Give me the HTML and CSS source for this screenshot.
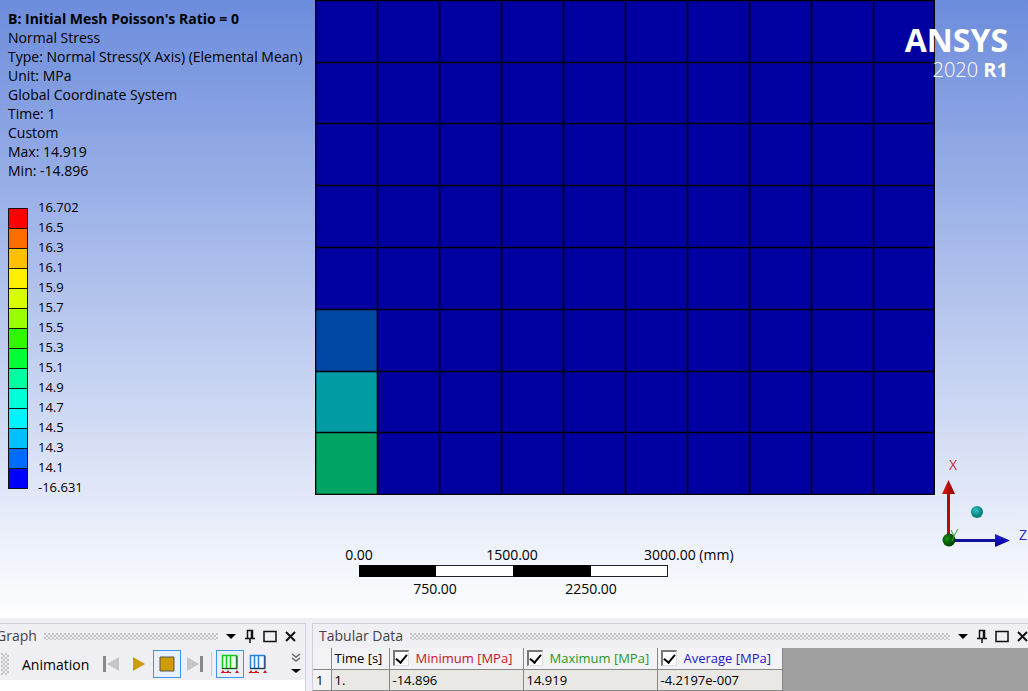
FILE: index.html
```
<!DOCTYPE html>
<html lang="en">
<head>
    <meta charset="UTF-8">
    <meta name="viewport" content="width=device-width, initial-scale=1.0">
    <title>Normal Stress</title>
    <link rel="stylesheet" href="styles.css">
</head>
<body>
    <main class="viewport">
        <section class="info">
            <h1>B: Initial Mesh Poisson's Ratio = 0</h1>
            <p>Normal Stress</p>
            <p>Type: Normal Stress(X Axis) (Elemental Mean)</p>
            <p>Unit: MPa</p>
            <p>Global Coordinate System</p>
            <p>Time: 1</p>
            <p>Custom</p>
            <p>Max: 14.919</p>
            <p>Min: -14.896</p>

            <div class="legend">
                <div class="swatches">
                    <i class="c1"></i><i class="c2"></i><i class="c3"></i><i class="c4"></i><i class="c5"></i><i class="c6"></i><i class="c7"></i>
                    <i class="c8"></i><i class="c9"></i><i class="c10"></i><i class="c11"></i><i class="c12"></i><i class="c13"></i><i class="c14"></i>
                </div>
                <ul class="values">
                    <li>16.702</li>
                    <li>16.5</li>
                    <li>16.3</li>
                    <li>16.1</li>
                    <li>15.9</li>
                    <li>15.7</li>
                    <li>15.5</li>
                    <li>15.3</li>
                    <li>15.1</li>
                    <li>14.9</li>
                    <li>14.7</li>
                    <li>14.5</li>
                    <li>14.3</li>
                    <li>14.1</li>
                    <li>-16.631</li>
                </ul>
            </div>
        </section>

        <svg class="mesh" viewBox="0 0 620 495">
            <rect width="620" height="495" fill="#0000a0"/>
            <rect y="309" width="62" height="62" fill="#0046a2"/>
            <rect y="371" width="62" height="62" fill="#009ba3"/>
            <rect y="432" width="62" height="62" fill="#00a364"/>
            <path d="M.5 0V495M62.5 0V495M124.5 0V495M186.5 0V495M248.5 0V495M310.5 0V495M372.5 0V495M434.5 0V495M496.5 0V495M558.5 0V495M619.5 0V495
                M0 .5H620M0 62.5H620M0 123.5H620M0 185.5H620M0 247.5H620M0 309.5H620M0 371.5H620M0 432.5H620M0 494.5H620" stroke="#000" stroke-width="1.600"/>
        </svg>

        <svg class="scale" width="400" height="60" viewBox="0 0 400 60">
            <rect x="19.500" y="21.500" width="308" height="11" fill="#fff" stroke="#222"/>
            <path d="M19 21h77v12H19zM173 21h78v12h-78z"/>
            <text x="19" y="16">0.00</text>
            <text x="172" y="16">1500.00</text>
            <text class="end" x="304" y="16">3000.00 (mm)</text>
            <text x="95" y="50">750.00</text>
            <text x="251" y="50">2250.00</text>
        </svg>

        <svg class="triad" width="93" height="100" viewBox="0 0 93 100">
            <defs>
                <radialGradient id="teal" cx=".4" cy=".35"><stop offset="0" stop-color="#35c4c4"/><stop offset="1" stop-color="#078080"/></radialGradient>
                <radialGradient id="green" cx=".35" cy=".4"><stop offset="0" stop-color="#189018"/><stop offset="1" stop-color="#004a00"/></radialGradient>
                <linearGradient id="red"><stop offset="0" stop-color="#e01818"/><stop offset="1" stop-color="#8c0000"/></linearGradient>
                <linearGradient id="blue" x2="0" y2="1"><stop offset="0" stop-color="#2020e0"/><stop offset="1" stop-color="#000090"/></linearGradient>
            </defs>
            <path d="M12 38h3v44h-3z" fill="#b80808"/>
            <path d="M13.500 25L20 39H7z" fill="url(#red)"/>
            <path d="M17 84h44v3H17z" fill="#101098"/>
            <path d="M60 79L75 85.500L60 92z" fill="url(#blue)"/>
            <circle cx="14" cy="85" r="6.500" fill="url(#green)"/>
            <path d="M16 75l3 6 4-7M19 81l-2 5" fill="none" stroke="#35a035"/>
            <circle cx="42" cy="57" r="6" fill="url(#teal)"/>
            <text class="x" x="18" y="15">X</text>
            <text class="z" x="88" y="85">Z</text>
        </svg>

        <div class="brand">
            <strong>ANSYS</strong>
            <span>2020 <b>R1</b></span>
        </div>
    </main>

    <div class="dock">
        <section class="panel graph">
            <header>
                <h2>Graph</h2>
                <span class="dots"></span>
                <button aria-label="Menu"><svg width="12" height="14"><path d="M1 5h10l-5 5z"/></svg></button>
                <button aria-label="Pin"><svg width="12" height="14"><path d="M3.500 9V1.500h5V9M1 9.500h10M6 9v5M7.500 2v7" fill="none" stroke="#111" stroke-width="1.500"/></svg></button>
                <button aria-label="Maximize"><svg width="14" height="14"><path d="M1 2.500h12v10H1z" fill="none" stroke="#111" stroke-width="1.500"/></svg></button>
                <button aria-label="Close"><svg width="12" height="14"><path d="M2 3l9 9M11 3l-9 9" stroke="#111" stroke-width="2"/></svg></button>
            </header>
            <div class="toolbar">
                <span class="grip"></span>
                <span class="name">Animation</span>
                <button aria-label="First frame"><svg width="18" height="18"><path d="M1 1h3v16H1z" fill="#8a8a8a"/><path d="M17 2v14L5 9z" fill="#c6c6c6"/></svg></button>
                <button aria-label="Play"><svg width="18" height="18"><path d="M3 2l12 7-12 7z" fill="#d09a08"/></svg></button>
                <button class="on" aria-label="Stop"><svg width="18" height="18"><path d="M2 2h14v14H2z" fill="#cf9c06" stroke="#555"/></svg></button>
                <button aria-label="Last frame"><svg width="18" height="18"><path d="M14 1h3v16h-3z" fill="#8a8a8a"/><path d="M1 2v14l12-7z" fill="#c6c6c6"/></svg></button>
                <span class="sep"></span>
                <button class="on" aria-label="Distributed"><svg width="20" height="20"><path d="M2.500 14.500v-13h14v13zM6.500 1v13M10.500 1v13" fill="#effff0" stroke="#18c818" stroke-width="1.500"/><path d="M2 14.500h15V2" fill="none" stroke="#333"/><path d="M1 19l2-3 2 3zM6 19l2-3 2 3zM15 19l2-3 2 3zM1 18h10v1H1z" fill="#d01818"/></svg></button>
                <button aria-label="Result sets"><svg width="20" height="20"><path d="M2.500 14.500v-13h14v13zM6.500 1v13M10.500 1v13" fill="#f4faff" stroke="#2a80d8" stroke-width="1.500"/><path d="M2 14.500h15V2" fill="none" stroke="#333"/><path d="M1 19l2-3 2 3zM6 19l2-3 2 3zM15 19l2-3 2 3zM1 18h10v1H1z" fill="#d01818"/></svg></button>
                <button class="more" aria-label="More"><svg width="12" height="22"><path d="M2 1l4 3 4-3M2 5l4 3 4-3" fill="none" stroke="#666" stroke-width="1.500"/><path d="M1 16h10l-5 4z"/></svg></button>
            </div>
            <div class="plot"></div>
        </section>

        <section class="panel tabular">
            <header>
                <h2>Tabular Data</h2>
                <span class="dots"></span>
                <button aria-label="Menu"><svg width="12" height="14"><path d="M1 5h10l-5 5z"/></svg></button>
                <button aria-label="Pin"><svg width="12" height="14"><path d="M3.500 9V1.500h5V9M1 9.500h10M6 9v5M7.500 2v7" fill="none" stroke="#111" stroke-width="1.500"/></svg></button>
                <button aria-label="Maximize"><svg width="14" height="14"><path d="M1 2.500h12v10H1z" fill="none" stroke="#111" stroke-width="1.500"/></svg></button>
                <button aria-label="Close"><svg width="12" height="14"><path d="M2 3l9 9M11 3l-9 9" stroke="#111" stroke-width="2"/></svg></button>
            </header>
            <div class="sheet">
                <table>
                    <colgroup><col class="num"><col class="time"><col class="val"><col class="val"><col class="avg"></colgroup>
                    <thead>
                        <tr>
                            <th></th>
                            <th>Time [s]</th>
                            <th><label class="min"><input type="checkbox" checked>Minimum [MPa]</label></th>
                            <th><label class="max"><input type="checkbox" checked>Maximum [MPa]</label></th>
                            <th><label class="mean"><input type="checkbox" checked>Average [MPa]</label></th>
                        </tr>
                    </thead>
                    <tbody>
                        <tr>
                            <th>1</th>
                            <td>1.</td>
                            <td>-14.896</td>
                            <td>14.919</td>
                            <td>-4.2197e-007</td>
                        </tr>
                    </tbody>
                </table>
            </div>
        </section>
    </div>
</body>
</html>
```
FILE: styles.css
```
* { box-sizing: border-box; }
body { margin: 0; height: 100vh; display: flex; flex-direction: column; overflow: hidden; font-family: "Open Sans", "Noto Sans", sans-serif; font-size: 13px; color: #000; }
h1, h2, p, ul { margin: 0; padding: 0; font-size: 14px; }
svg { display: block; }
button { padding: 0; border: 0; background: none; display: flex; align-items: center; justify-content: center; }

/* model view */
.viewport { flex: 1; min-height: 0; position: relative; display: grid; grid-template-columns: 315px minmax(0, 620fr) minmax(0, 93fr); grid-template-rows: auto minmax(0, 1fr); background: linear-gradient(#6c8cdc, #fff); }
.info { grid-row: 1 / 3; padding: 9px 0 0 8px; line-height: 19px; white-space: nowrap; }
.mesh { width: 100%; }
.scale { grid-column: 2; grid-row: 2; margin: 49px 0 0 25px; }
.scale text { font-size: 14px; text-anchor: middle; }
.scale .end { text-anchor: start; }
.triad { grid-column: 3; grid-row: 1 / 3; align-self: end; margin-bottom: 63px; }
.triad text { font-size: 14px; text-anchor: middle; }
.triad .x { fill: #d02840; }
.triad .z { fill: #2828d0; }
.brand { position: absolute; top: 20px; right: 20px; display: flex; flex-direction: column; align-items: flex-end; color: #fff; }
.brand strong { font-size: 32px; line-height: 40px; }
.brand span { font-size: 20px; line-height: 20px; font-weight: 300; }
.brand b { font-weight: 700; }

/* contour legend */
.legend { display: flex; gap: 10px; margin-top: 17px; }
.swatches { width: 20px; height: 281px; margin-top: 11px; border: 1px solid #111; border-bottom: 0; }
.swatches i { display: block; height: 20px; border-bottom: 1px solid #111; }
.values { list-style: none; font-size: 13px; line-height: 20px; }
.c1 { background: #f00; }
.c2 { background: #ff6d00; }
.c3 { background: #ffc000; }
.c4 { background: #fff000; }
.c5 { background: #d8ff00; }
.c6 { background: #9cff00; }
.c7 { background: #30f800; }
.c8 { background: #00ff38; }
.c9 { background: #00ffa0; }
.c10 { background: #00ffd8; }
.c11 { background: #00f4ff; }
.c12 { background: #00c0ff; }
.c13 { background: #006cff; }
.c14 { background: #00f; }

/* docked panels */
.dock { flex: none; display: flex; gap: 6px; height: 73px; padding-top: 5px; margin-left: -8px; background: #f0eff4; }
.panel { display: flex; flex-direction: column; border-top: 1px solid #cfcfdd; }
.graph { width: 314px; border-right: 1px solid #cfcfdd; }
.tabular { flex: 1; border-left: 1px solid #cfcfdd; }
.panel header { height: 24px; display: flex; align-items: center; gap: 7px; padding: 0 9px 0 4px; }
.tabular header { padding: 0 0 0 6px; }
.panel h2 { font-weight: 400; line-height: 20px; color: #444; }
.dots { flex: 1; height: 7px; background-image: radial-gradient(circle at 1px 1px, #c4c4c8 1px, transparent 1px), radial-gradient(circle at 3px 3px, #c4c4c8 1px, transparent 1px); background-size: 4px 4px; }
.toolbar { height: 32px; display: flex; align-items: center; padding-left: 9px; font-size: 14px; }
.grip { width: 8px; height: 22px; background-image: radial-gradient(circle at 1px 1px, #c4c4c8 1px, transparent 1px), radial-gradient(circle at 3px 3px, #c4c4c8 1px, transparent 1px); background-size: 4px 4px; }
.name { margin: 0 8px 0 13px; }
.toolbar button { width: 28px; height: 28px; border: 1px solid transparent; }
.toolbar .on { border-color: #3f95e8; background: #e8f1fb; }
.sep { width: 1px; height: 24px; margin: 0 4px 0 2px; background: #ccc; }
.toolbar .more { width: 14px; margin-left: auto; margin-right: 2px; }
.plot { flex: 1; background: #fff; }

.sheet { flex: 1; background: #a0a0a0; }
table { width: 469px; border-collapse: collapse; table-layout: fixed; font-size: 13px; background: #e9e8e5; }
.num { width: 18px; }
.time { width: 58px; }
.val { width: 134px; }
.avg { width: 125px; }
th, td { height: 21px; padding: 0 0 0 3px; border-right: 1px solid #888; border-bottom: 1px solid #888; font-weight: 400; text-align: left; white-space: nowrap; line-height: 18px; }
th { background: #f3f3f5; }
label { display: flex; align-items: center; gap: 7px; }
input { appearance: none; width: 16px; height: 16px; margin: 0; background: #fff; border: 1px solid #ddd; border-top: 2px solid #777; border-left: 2px solid #777; display: flex; align-items: center; justify-content: center; }
input:checked::before { content: ""; width: 5px; height: 9px; margin-bottom: 2px; border: solid #000; border-width: 0 2px 2px 0; transform: rotate(40deg); }
.min { color: #c8142c; }
.max { color: #2a962e; }
.mean { color: #2418c8; }
```
